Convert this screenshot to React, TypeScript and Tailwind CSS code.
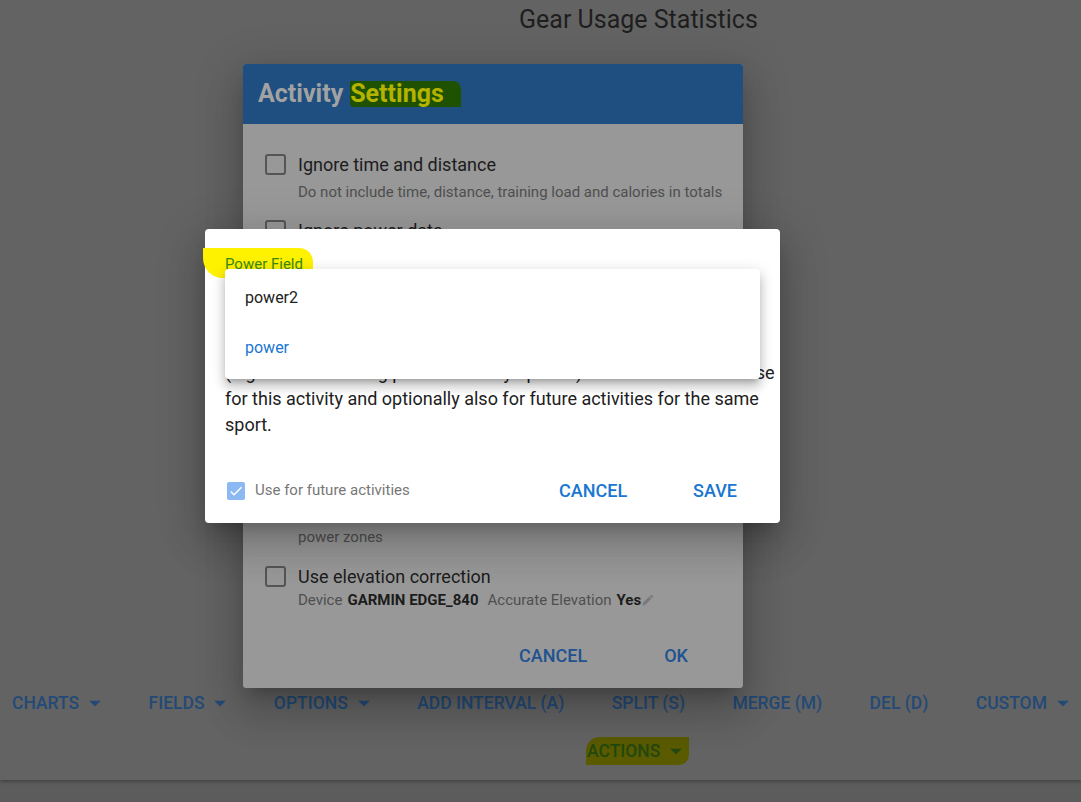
import { ReactNode } from "react";

const toolbarItems = [
  { label: "Charts", menu: true },
  { label: "Fields", menu: true },
  { label: "Options", menu: true },
  { label: "Add interval (A)", menu: false },
  { label: "Split (S)", menu: false },
  { label: "Merge (M)", menu: false },
  { label: "Del (D)", menu: false },
  { label: "Custom", menu: true },
];

function ArrowDrop({ className = "" }: { className?: string }) {
  return (
    <svg viewBox="0 0 24 24" width="28" height="28" className={className} fill="currentColor">
      <path d="M7 10l5 5 5-5z" />
    </svg>
  );
}

function EditIcon() {
  return (
    <svg viewBox="0 0 24 24" width="14" height="14" fill="#7a7a7a">
      <path d="M3 17.25V21h3.75L17.81 9.94l-3.75-3.75L3 17.25zM20.71 7.04c.39-.39.39-1.02 0-1.41l-2.34-2.34a.996.996 0 0 0-1.41 0l-1.83 1.83 3.75 3.75 1.83-1.83z" />
    </svg>
  );
}

function Box() {
  return <div className="mt-[2px] h-[21px] w-[21px] shrink-0 rounded-[3px] border-2 border-[#555555]" />;
}

function SettingRow({ label, children, className = "" }: { label: string; children?: ReactNode; className?: string }) {
  return (
    <div className={`flex gap-[12px] ${className}`}>
      <Box />
      <div className="whitespace-nowrap">
        <div className="text-[18px] leading-[26px] text-[#1c1c1c]">{label}</div>
        {children}
      </div>
    </div>
  );
}

function ToolButton({ label, menu }: { label: string; menu: boolean }) {
  return (
    <button className="flex items-center text-[17.5px] font-medium uppercase text-[#234a76]">
      {label}
      {menu && <ArrowDrop className="-mr-[8px] ml-[2px]" />}
    </button>
  );
}

export default function App() {
  return (
    <div className="relative h-[802px] w-[1081px] overflow-hidden bg-[#5c5c5c] font-['Roboto',sans-serif]">
      {/* page underneath the dialogs */}
      <div className="bg-[#636363] shadow-[0_2px_3px_rgba(0,0,0,0.25)]">
        <div className="flex h-[40px] items-center pl-[519px] text-[25px] text-[#1e1e1e]">Gear Usage Statistics</div>
        <div className="h-[641px]" />
        <div className="flex items-center justify-between px-[12px] py-[8px]">
          {toolbarItems.map((item) => (
            <ToolButton key={item.label} label={item.label} menu={item.menu} />
          ))}
        </div>
        <div className="flex pb-[15px] pl-[586px] pt-[12px]">
          <button className="flex items-center rounded-tl-[14px] rounded-br-[10px] bg-[#5a5a00] pl-[1px] pr-[3px] text-[17.5px] font-medium uppercase text-[#23480f]">
            Actions
            <ArrowDrop className="-mr-[4px] ml-[2px]" />
          </button>
        </div>
      </div>

      {/* activity settings dialog */}
      <div className="absolute left-[243px] top-[64px] flex h-[624px] w-[500px] flex-col overflow-hidden rounded-[3px] bg-[#989898] shadow-[0_11px_15px_-7px_rgba(0,0,0,0.2),0_24px_38px_3px_rgba(0,0,0,0.14),0_9px_46px_8px_rgba(0,0,0,0.12)]">
        <div className="flex h-[60px] shrink-0 items-center bg-[#1f4e80] px-[15px] text-[25px] font-bold text-[#a2a2a2]">
          Activity
          <span className="ml-[7px] rounded-tr-[8px] rounded-bl-[4px] bg-[#1f5200] pr-[17px] leading-[26px] text-[#b3b300]">Settings</span>
        </div>
        <div className="flex flex-1 flex-col px-[22px] pt-[28px]">
          <SettingRow label="Ignore time and distance">
            <div className="mt-[1px] text-[15px] leading-[26px] text-[#4f4f4f]">
              Do not include time, distance, training load and calories in totals
            </div>
          </SettingRow>
          <SettingRow label="Ignore power data" className="mt-[13px]" />
          <div className="h-[280px]" />
          <div className="pl-[33px] text-[15px] leading-[26px] text-[#4f4f4f]">power zones</div>
          <SettingRow label="Use elevation correction" className="mt-[14px]">
            <div className="flex items-center text-[15px] leading-[20px] text-[#4f4f4f]">
              Device <b className="ml-[5px] mr-[9px] font-bold text-[#1c1c1c]">GARMIN EDGE_840</b> Accurate Elevation
              <b className="ml-[5px] font-bold text-[#1c1c1c]">Yes</b>
              <EditIcon />
            </div>
          </SettingRow>
          <div className="mt-auto flex justify-end gap-[45px] pb-[13px] pr-[17px]">
            <button className="px-[16px] py-[6px] text-[18px] font-medium text-[#1f5290]">CANCEL</button>
            <button className="px-[16px] py-[6px] text-[18px] font-medium text-[#1f5290]">OK</button>
          </div>
        </div>
      </div>

      {/* power field dialog */}
      <div className="absolute left-[205px] top-[229px] h-[294px] w-[575px] rounded-[4px] bg-white px-[20px] pt-[19px] shadow-[0_11px_15px_-7px_rgba(0,0,0,0.2),0_24px_38px_3px_rgba(0,0,0,0.14),0_9px_46px_8px_rgba(0,0,0,0.12)]">
        <div className="flex">
          <span className="-ml-[22px] rounded-tr-[14px] rounded-bl-[20px] bg-[#fff200] pb-[6px] pl-[22px] pr-[10px] pt-[8px] text-[15px] leading-[16px] text-[#3a8a12]">
            Power Field
          </span>
        </div>
        <div className="h-[38px] border-b border-[#1976d2]" />
        <p className="mt-[44px] whitespace-nowrap text-[18px] leading-[26px] text-[#212121]">
          (e.g. Garmin running power and Stryd power). Choose the field to use
          <br />
          for this activity and optionally also for future activities for the same
          <br />
          sport.
        </p>
        <div className="mt-[39px] flex items-center">
          <div className="ml-[2px] flex h-[18px] w-[18px] items-center justify-center rounded-[2px] bg-[#8db9f3]">
            <svg viewBox="0 0 24 24" width="16" height="16" fill="white">
              <path d="M9 16.17 4.83 12l-1.42 1.41L9 19 21 7l-1.41-1.41z" />
            </svg>
          </div>
          <span className="ml-[10px] text-[15px] text-[#777777]">Use for future activities</span>
          <div className="ml-auto flex gap-[66px] pr-[23px]">
            <button className="text-[18px] font-medium text-[#1976d2]">CANCEL</button>
            <button className="text-[18px] font-medium text-[#1976d2]">SAVE</button>
          </div>
        </div>

        {/* open select menu */}
        <div className="absolute left-[20px] top-[40px] w-[535px] rounded-[4px] bg-white pb-[6px] pt-[4px] shadow-[0_5px_5px_-3px_rgba(0,0,0,0.2),0_8px_10px_1px_rgba(0,0,0,0.14),0_3px_14px_2px_rgba(0,0,0,0.12)]">
          <div className="flex h-[50px] items-center px-[20px] text-[16px] text-[#212121]">power2</div>
          <div className="flex h-[50px] items-center px-[20px] text-[16px] text-[#1976d2]">power</div>
        </div>
      </div>
    </div>
  );
}
